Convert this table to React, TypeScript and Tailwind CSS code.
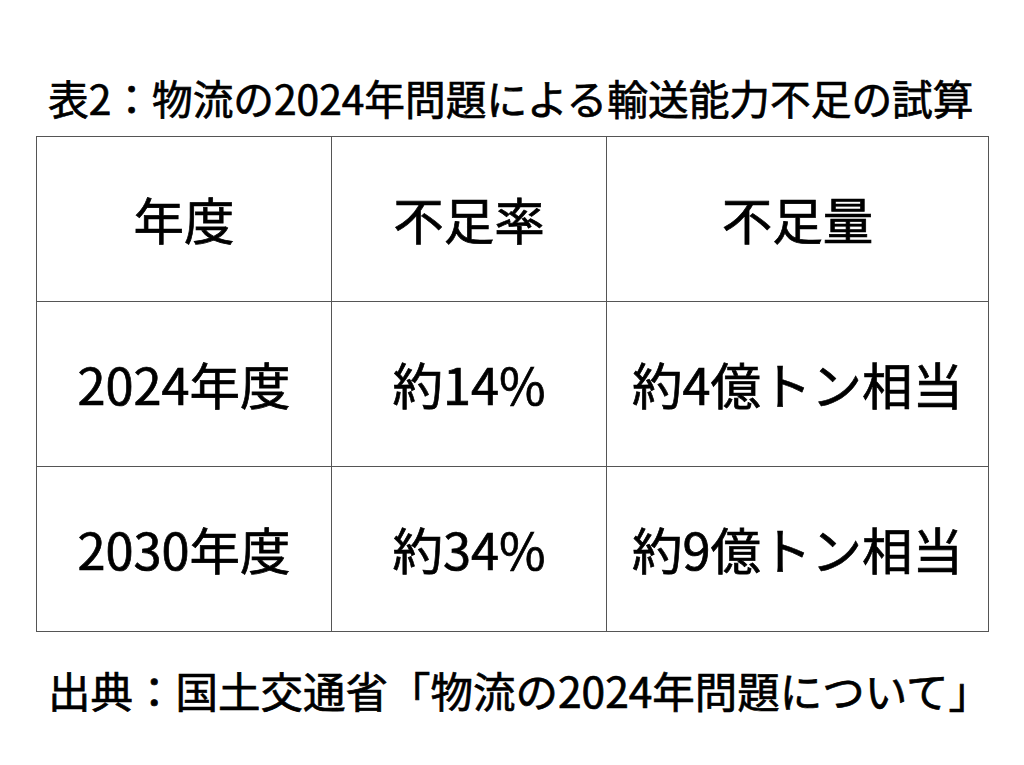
const rows = [
  ["年度", "不足率", "不足量"],
  ["2024年度", "約14%", "約4億トン相当"],
  ["2030年度", "約34%", "約9億トン相当"],
];

export default function App() {
  return (
    <div
      className="w-[1024px] h-[765px] bg-white text-black flex flex-col [-webkit-text-stroke:0.7px_black]"
      style={{ fontFamily: '"Noto Sans CJK JP", "Noto Sans", sans-serif' }}
    >
      <h1 className="mt-[74px] ml-[48px] text-[40.7px] leading-[48px] font-normal whitespace-nowrap">
        表2：物流の2024年問題による輸送能力不足の試算
      </h1>
      <div className="mt-[14px] ml-[36px] w-[953px] grid grid-cols-[294px_275px_1fr] border border-[#555]">
        {rows.map((row, i) =>
          row.map((cell, j) => (
            <div
              key={i + "-" + j}
              className={
                "flex items-center justify-center text-[50.5px] font-normal " +
                (i === 0 ? "h-[164px] " : "h-[165px] ") +
                (i > 0 ? "border-t border-[#555] " : "") +
                (j > 0 ? "border-l border-[#555]" : "")
              }
            >
              {cell}
            </div>
          ))
        )}
      </div>
      <p className="mt-[34px] ml-[48px] text-[42.5px] leading-[48px] font-normal whitespace-nowrap">
        出典：国土交通省「物流の2024年問題について」
      </p>
    </div>
  );
}
